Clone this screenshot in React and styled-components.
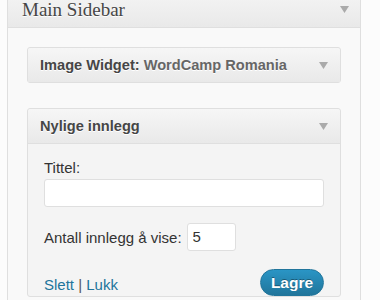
import React from "react";
import styled, { createGlobalStyle } from "styled-components";

const GlobalStyle = createGlobalStyle`
  body {
    margin: 0;
    background: #fcfcfc;
    font-family: "Liberation Sans", Arial, sans-serif;
    color: #333;
  }
`;

const Page = styled.div`
  display: flex;
  padding-left: 7px;
  margin-top: -9px;
`;

const Sidebar = styled.div`
  width: 352px;
  border: 1px solid #dfdfdf;
  border-radius: 3px;
  background: #f9f9f9;
  height: 330px;
`;

const SidebarHeader = styled.div`
  height: 35px;
  display: flex;
  align-items: center;
  justify-content: space-between;
  padding: 0 11px 0 14px;
  background: linear-gradient(to bottom, #f4f4f4, #e9e9e9);
  border-bottom: 1px solid #dfdfdf;
`;

const SidebarTitle = styled.h3`
  margin: 0;
  padding-top: 1px;
  font-family: "Liberation Serif", "Times New Roman", serif;
  font-weight: normal;
  font-size: 19px;
  color: #464646;
  text-shadow: 0 1px 0 #fff;
`;

const SidebarBody = styled.div`
  display: flex;
  flex-direction: column;
  gap: 25px;
  padding: 19px 19px 0 19px;
`;

const Widget = styled.div`
  border: 1px solid #dfdfdf;
  border-radius: 3px;
  background: #f4f4f4;
`;

const WidgetHeader = styled.div`
  height: 34px;
  display: flex;
  align-items: center;
  justify-content: space-between;
  padding: 0 12px;
  background: linear-gradient(to bottom, #f6f6f6, #e9e9e9);
  border-radius: 3px 3px 0 0;
  border-bottom: ${(p) => (p.$open ? "1px solid #dfdfdf" : "none")};
`;

const WidgetTitle = styled.h4`
  margin: 0;
  font-size: 14.6px;
  font-weight: bold;
  color: #464646;
  text-shadow: 0 1px 0 #fff;
  white-space: nowrap;
`;

const InTitle = styled.span`
  color: #666;
`;

const WidgetBody = styled.div`
  padding: 15px 16px 0 16px;
  display: flex;
  flex-direction: column;
`;

const Label = styled.label`
  font-size: 15px;
  line-height: 18px;
  margin-bottom: 2px;
`;

const TextInput = styled.input`
  box-sizing: border-box;
  width: ${(p) => p.$width || "100%"};
  height: 28px;
  border: 1px solid #dfdfdf;
  border-radius: 3px;
  background: #fff;
  font-family: "Liberation Sans", Arial, sans-serif;
  font-size: 15px;
  color: #333;
  padding: 0 5px 2px 5px;
  outline: none;
`;

const Row = styled.div`
  display: flex;
  align-items: center;
  gap: 5px;
  margin-top: 16px;
  font-size: 15px;
`;

const Footer = styled.div`
  display: flex;
  align-items: center;
  justify-content: space-between;
  margin-top: 18px;
  font-size: 15px;
`;

const Links = styled.div`
  color: #555;
  padding-top: 4px;
`;

const Link = styled.a`
  color: #21759b;
  text-decoration: none;
`;

const SaveButton = styled.button`
  width: 64px;
  height: 27px;
  border: 1px solid #21759b;
  border-radius: 14px;
  background: linear-gradient(to bottom, #2a95c5, #21759b);
  color: #fff;
  font-family: "Liberation Sans", Arial, sans-serif;
  font-weight: bold;
  font-size: 15.5px;
  text-shadow: 0 -1px 0 rgba(0, 0, 0, 0.35);
  padding: 0;
`;

const Arrow = () => (
  <svg width="9" height="7" viewBox="0 0 9 7">
    <path d="M0 0h9L4.5 7z" fill="#aaa" />
  </svg>
);

export default function App() {
  return (
    <>
      <GlobalStyle />
      <Page>
        <Sidebar>
          <SidebarHeader>
            <SidebarTitle>Main Sidebar</SidebarTitle>
            <Arrow />
          </SidebarHeader>
          <SidebarBody>
            <Widget>
              <WidgetHeader>
                <WidgetTitle>
                  Image Widget: <InTitle>WordCamp Romania</InTitle>
                </WidgetTitle>
                <Arrow />
              </WidgetHeader>
            </Widget>
            <Widget>
              <WidgetHeader $open>
                <WidgetTitle>Nylige innlegg</WidgetTitle>
                <Arrow />
              </WidgetHeader>
              <WidgetBody>
                <Label>Tittel:</Label>
                <TextInput type="text" defaultValue="" />
                <Row>
                  <span>Antall innlegg å vise:</span>
                  <TextInput type="text" defaultValue="5" $width="49px" />
                </Row>
                <Footer>
                  <Links>
                    <Link href="#">Slett</Link> | <Link href="#">Lukk</Link>
                  </Links>
                  <SaveButton>Lagre</SaveButton>
                </Footer>
              </WidgetBody>
            </Widget>
          </SidebarBody>
        </Sidebar>
      </Page>
    </>
  );
}
